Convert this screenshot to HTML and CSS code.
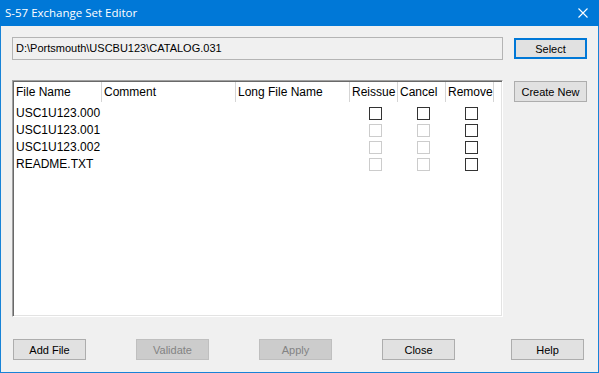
FILE: index.html
```html
<!DOCTYPE html>
<html lang="en">
<head>
  <meta charset="UTF-8" />
  <title>S-57 Exchange Set Editor</title>
  <link rel="stylesheet" href="styles.css">
</head>
<body>
<div class="window">
  <div class="titlebar">
    <span class="title">S-57 Exchange Set Editor</span>
    <svg class="close" width="10" height="10" viewBox="0 0 10 10">
      <path d="M0.5 0.5 L9.5 9.5 M9.5 0.5 L0.5 9.5" stroke="#fff" stroke-width="1.1" fill="none" />
    </svg>
  </div>

  <div class="content">
    <div class="top-row">
      <div class="path-field">D:\Portsmouth\USCBU123\CATALOG.031</div>
      <button class="btn default">Select</button>
    </div>

    <div class="middle-row">
      <div class="list">
        <div class="list-head">
          <div class="col">File Name</div>
          <div class="col">Comment</div>
          <div class="col">Long File Name</div>
          <div class="col">Reissue</div>
          <div class="col">Cancel</div>
          <div class="col">Remove</div>
        </div>
        <div class="list-body">
          <div class="row">
            <div class="cell">USC1U123.000</div>
            <div class="cell"></div>
            <div class="cell"></div>
            <div class="cell check"><span class="box"></span></div>
            <div class="cell check"><span class="box"></span></div>
            <div class="cell check"><span class="box"></span></div>
          </div>
          <div class="row">
            <div class="cell">USC1U123.001</div>
            <div class="cell"></div>
            <div class="cell"></div>
            <div class="cell check"><span class="box disabled"></span></div>
            <div class="cell check"><span class="box disabled"></span></div>
            <div class="cell check"><span class="box"></span></div>
          </div>
          <div class="row">
            <div class="cell">USC1U123.002</div>
            <div class="cell"></div>
            <div class="cell"></div>
            <div class="cell check"><span class="box disabled"></span></div>
            <div class="cell check"><span class="box disabled"></span></div>
            <div class="cell check"><span class="box"></span></div>
          </div>
          <div class="row">
            <div class="cell">README.TXT</div>
            <div class="cell"></div>
            <div class="cell"></div>
            <div class="cell check"><span class="box disabled"></span></div>
            <div class="cell check"><span class="box disabled"></span></div>
            <div class="cell check"><span class="box"></span></div>
          </div>
        </div>
      </div>
      <div class="side">
        <button class="btn">Create New</button>
      </div>
    </div>

    <div class="bottom-row">
      <button class="btn">Add File</button>
      <button class="btn" disabled>Validate</button>
      <button class="btn" disabled>Apply</button>
      <button class="btn">Close</button>
      <button class="btn help">Help</button>
    </div>
  </div>
</div>
</body>
</html>
```

FILE: styles.css
```css
body {
  margin: 0;
  padding: 0;
  background: #f0f0f0;
  font-family: "Liberation Sans", Arial, sans-serif;
  font-size: 11px;
  color: #000;
}
.window {
  width: 599px;
  height: 373px;
  box-sizing: border-box;
  border: 1px solid #1883d7;
  border-top: none;
  background: #f0f0f0;
}
.titlebar {
  height: 26px;
  margin: 0 -1px;
  background: #0078d7;
  display: flex;
  align-items: center;
  justify-content: space-between;
  padding: 0 11px 0 5px;
}
.title {
  color: #fff;
  font-family: "Open Sans", "Noto Sans", sans-serif;
  font-size: 11.5px;
  padding-bottom: 1px;
}
.close {
  display: block;
}
.content {
  padding: 11px 10px 0 11px;
}
.top-row {
  display: flex;
  align-items: center;
  gap: 11px;
}
.path-field {
  width: 491px;
  height: 23px;
  box-sizing: border-box;
  border: 1px solid #b4b4b4;
  padding: 0 3px;
  line-height: 21px;
  white-space: nowrap;
}
.btn {
  width: 73px;
  height: 21px;
  box-sizing: border-box;
  padding: 0;
  border: 1px solid #adadad;
  background: #e1e1e1;
  font-family: "Liberation Sans", Arial, sans-serif;
  font-size: 11px;
  color: #000;
}
.btn.default {
  border: 2px solid #0078d7;
}
.btn:disabled {
  background: #cccccc;
  border-color: #bfbfbf;
  color: #838383;
}
.middle-row {
  display: flex;
  gap: 11px;
  margin-top: 20px;
}
.side {
  padding-top: 1px;
}
.list {
  width: 491px;
  height: 237px;
  box-sizing: border-box;
  background: #fff;
  border: 1px solid;
  border-color: #a0a0a0 #fff #fff #a0a0a0;
  box-shadow: inset 1px 1px #696969, inset -1px -1px #e3e3e3;
  padding: 1px 0 0 1px;
  font-size: 12px;
}
.list-head, .row {
  display: grid;
  grid-template-columns: 88px 134px 114px 48px 48px 48px;
}
.list-head {
  height: 20px;
}
.list-head .col {
  border-right: 1px solid #d5d5d5;
  padding-left: 2px;
  line-height: 21px;
  white-space: nowrap;
  overflow: hidden;
}
.list-body {
  padding-top: 2px;
}
.row {
  height: 17px;
}
.cell {
  padding-left: 2px;
  line-height: 18px;
  white-space: nowrap;
}
.check {
  display: flex;
  align-items: center;
  padding-left: 19px;
}
.box {
  width: 13px;
  height: 13px;
  box-sizing: border-box;
  border: 1px solid #333;
  background: #fff;
}
.box.disabled {
  border-color: #cccccc;
}
.bottom-row {
  display: flex;
  gap: 50px;
  margin-top: 22px;
  padding: 0 4px 0 1px;
}
.btn.help {
  margin-left: auto;
}
```
